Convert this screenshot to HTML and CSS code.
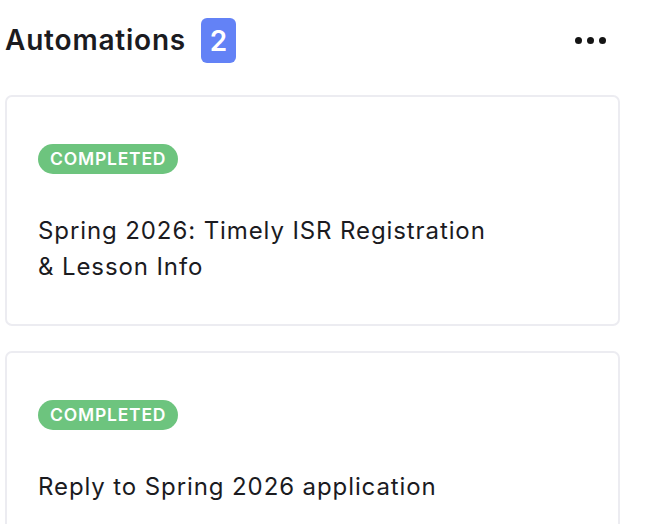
FILE: index.html
```html
<!DOCTYPE html>
<html>
<head>
<meta charset="utf-8">
<link rel="stylesheet" href="styles.css">
</head>
<body>
<div class="panel">
  <div class="header">
    <div class="title-wrap">
      <h2 class="title">Automations</h2>
      <span class="count">2</span>
    </div>
    <button class="more" aria-label="More">
      <span class="dot"></span><span class="dot"></span><span class="dot"></span>
    </button>
  </div>
  <div class="list">
    <div class="card">
      <span class="status">COMPLETED</span>
      <p class="name">Spring 2026: Timely ISR Registration<br>&amp; Lesson Info</p>
    </div>
    <div class="card">
      <span class="status">COMPLETED</span>
      <p class="name">Reply to Spring 2026 application</p>
    </div>
  </div>
</div>
</body>
</html>
```

FILE: styles.css
```css
* { box-sizing: border-box; }
html, body { margin: 0; padding: 0; background: #ffffff; }
body {
  font-family: "Inter", "Liberation Sans", sans-serif;
  color: #1b1b1f;
  overflow: hidden;
}
.panel {
  width: 620px;
  padding: 18px 0 0 5px;
}
.header {
  display: flex;
  align-items: center;
  justify-content: space-between;
  height: 45px;
  padding-right: 14px;
}
.title-wrap {
  display: flex;
  align-items: center;
  gap: 15px;
}
.title {
  margin: 0;
  font-size: 28px;
  font-weight: 600;
  letter-spacing: 0.8px;
  color: #1b1b1f;
  position: relative;
  top: -1px;
}
.count {
  display: flex;
  align-items: center;
  justify-content: center;
  width: 35px;
  height: 45px;
  border-radius: 6px;
  background: #6382f6;
  color: #ffffff;
  font-size: 28px;
  font-weight: 600;
}
.more {
  display: flex;
  gap: 4.5px;
  background: none;
  border: 0;
  padding: 0;
}
.dot {
  width: 7.5px;
  height: 7.5px;
  border-radius: 50%;
  background: #141414;
}
.list {
  display: flex;
  flex-direction: column;
  gap: 25px;
  margin-top: 32px;
}
.card {
  border: 2px solid #ececf1;
  border-radius: 7px;
  padding: 47px 32px 39px 31px;
  display: flex;
  flex-direction: column;
  align-items: flex-start;
}
.status {
  display: inline-block;
  height: 30px;
  line-height: 30px;
  padding: 0 12px;
  border-radius: 15px;
  background: #6dc47e;
  color: #ffffff;
  font-size: 17.5px;
  font-weight: 600;
  letter-spacing: 0.8px;
}
.name {
  margin: 39px 0 0 0;
  font-size: 24px;
  line-height: 36px;
  letter-spacing: 0.9px;
  color: #1b1b1f;
}
```
